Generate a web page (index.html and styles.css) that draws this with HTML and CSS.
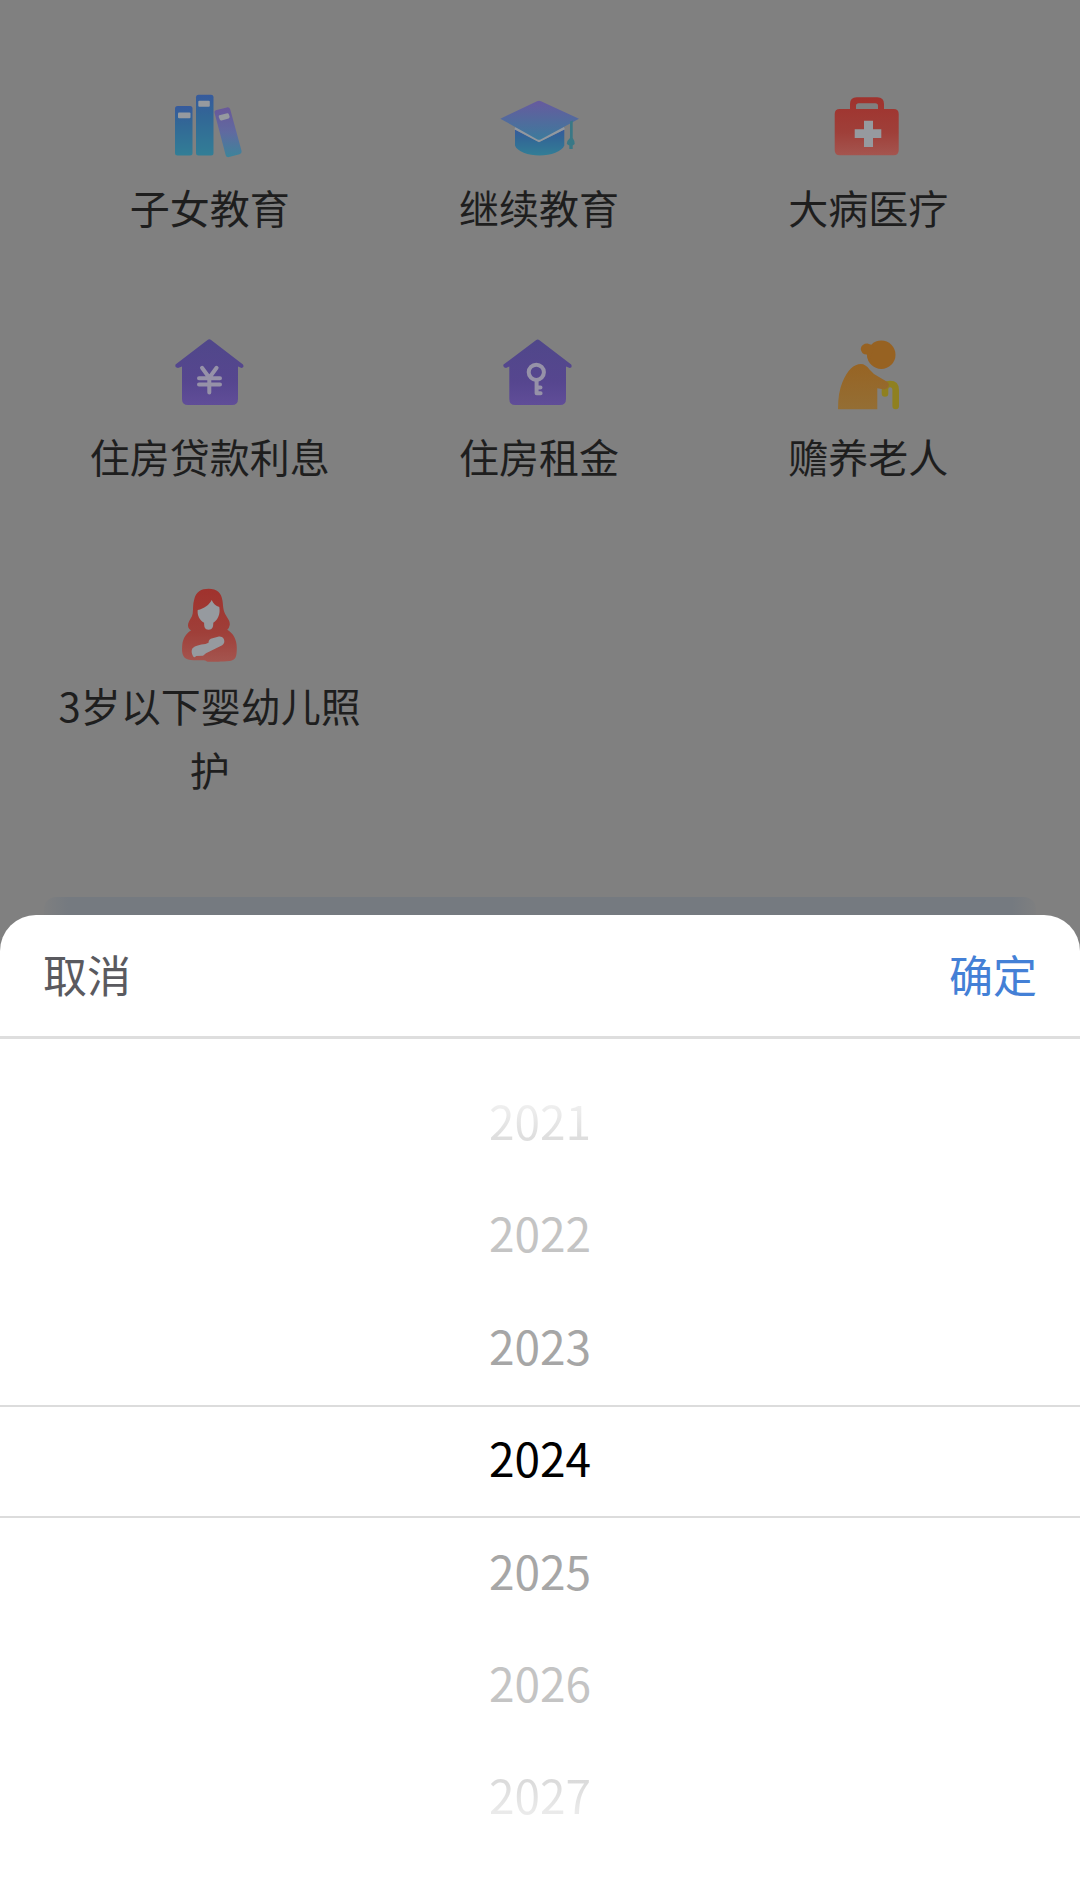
FILE: index.html
```
<!DOCTYPE html>
<html lang="zh-CN">
<head>
  <meta charset="UTF-8" />
  <title>专项附加扣除</title>
  <meta name="viewport" content="width=device-width,initial-scale=1" />
  <link rel="stylesheet" href="styles.css">
</head>
<body>
  <!-- shared gradients -->
  <svg class="defs" width="0" height="0">
    <defs>
      <linearGradient id="blue" x1="0" y1="0" x2="0" y2="1"><stop offset="0" stop-color="#365a9c"/><stop offset=".35" stop-color="#326796"/><stop offset="1" stop-color="#327e96"/></linearGradient>
      <linearGradient id="violet" x1="0" y1="0" x2="0" y2="1"><stop offset="0" stop-color="#69589a"/><stop offset=".5" stop-color="#606aa0"/><stop offset="1" stop-color="#3d849a"/></linearGradient>
      <linearGradient id="cap" x1="0" y1="0" x2="0" y2="1"><stop offset="0" stop-color="#675a9e"/><stop offset="1" stop-color="#3c7b9c"/></linearGradient>
      <linearGradient id="red" x1="0" y1="0" x2="0" y2="1"><stop offset="0" stop-color="#a0322d"/><stop offset=".6" stop-color="#9f3f39"/><stop offset="1" stop-color="#a4554f"/></linearGradient>
      <linearGradient id="house" x1="0" y1="0" x2="0" y2="1"><stop offset="0" stop-color="#50478a"/><stop offset=".65" stop-color="#56468f"/><stop offset="1" stop-color="#604d98"/></linearGradient>
      <linearGradient id="orange" x1="0" y1="0" x2="0" y2="1"><stop offset="0" stop-color="#976424"/><stop offset="1" stop-color="#946e34"/></linearGradient>
    </defs>
  </svg>

  <div class="grid">
    <div class="item">
      <svg class="icon" viewBox="0 0 80 90">
        <rect x="5" y="20" width="17.5" height="49.5" rx="2.5" fill="url(#blue)"/>
        <rect x="26" y="8.7" width="17.5" height="60.8" rx="2.5" fill="url(#blue)"/>
        <path d="M46.5 24L57 21.4Q59.4 21 60.2 23.3L71.6 65Q72 67.5 69.6 68.3L59 71.1Q56.4 71.6 55.7 69.2L44.6 27Q44 24.6 46.5 24Z" fill="url(#violet)"/>
        <rect class="light" x="8" y="26.5" width="12.5" height="5.7" rx="1"/>
        <rect class="light" x="28.3" y="14.7" width="11.5" height="6" rx="1"/>
        <path class="light" d="M49.4 29.3l7.8-2q1.2-.2 1.6 1l.8 2.3q.3 1.3-1 1.8l-7 2.1q-1.3.3-1.8-1l-1-2.6q-.3-1.2.6-1.6z"/>
      </svg>
      <p class="label">子女教育</p>
    </div>
    <div class="item">
      <svg class="icon" viewBox="0 0 80 90">
        <path d="M16 43.5L40 56l25.3-12.5v16C63 65.5 52 69.5 40.6 69.5S18 65.5 16 59.5z" fill="url(#blue)"/>
        <path class="edge" d="M16 42L40 54.5 65.3 42"/>
        <path d="M38 15.3q2-1 4 0L80 32.7 41.6 53.4q-1.6.8-3.2 0L1.3 32.7z" fill="url(#cap)"/>
        <path d="M71 35.5l2.7-1V52q2.5 3.500 2 6l-2 1.500v3.500h-3.400v-3.500l-2.500-1.500q0-3.500 3.200-6z" fill="#397886"/>
      </svg>
      <p class="label">继续教育</p>
    </div>
    <div class="item">
      <svg class="icon" viewBox="0 0 80 90">
        <path d="M22 23v-5q0-6.700 6.700-6.700h20.600Q56 11.300 56 18v5h9.700q5 0 5 5v36.300q0 5-5 5h-54q-5 0-5-5V28q0-5 5-5zM28 23h22v-3q0-2.700-2.700-2.700H30.700Q28 17.300 28 20z" fill="url(#red)" fill-rule="evenodd"/>
        <path class="light" d="M36 34.700h9v8.600h8.300V52H45v9h-9v-9h-9.300v-8.700H36z"/>
      </svg>
      <p class="label">大病医疗</p>
    </div>
    <div class="item">
      <svg class="icon" viewBox="0 0 80 90">
        <path d="M37.5 5q1.8-1.4 3.6 0L73 29.5q1.5 3-1.5 3.5L68 31.5V64q0 6-6 6H18q-6 0-6-6V31.5L8 33q-3.5-.5-2.5-3.5z" fill="url(#house)"/>
        <path class="line" d="M32 32.8l7.300 10 7.300-10M39.300 42.800v14.700M29 43.300h21M29 49.600h21"/>
      </svg>
      <p class="label">住房贷款利息</p>
    </div>
    <div class="item">
      <svg class="icon" viewBox="0 0 80 90">
        <path d="M36.900 5.200q1.800-1.400 3.600 0L72.200 29.500q1.500 3-1.500 3.500L67 31.500V64q0 6-6 6H16.300q-6 0-6-6V31.500L7 33q-3.500-.5-2.500-3.500z" fill="url(#house)"/>
        <circle class="line" cx="37.3" cy="37.3" r="7.6"/>
        <path class="line" d="M37.6 45v13.300h4M38 52.500h3.500"/>
      </svg>
      <p class="label">住房租金</p>
    </div>
    <div class="item">
      <svg class="icon" viewBox="0 0 80 90">
        <path class="cane" d="M57 58.5V54q0-5 5-5 5.700 0 5.700 6v16"/>
        <circle cx="53.3" cy="19.700" r="14.2" fill="#976222"/>
        <path d="M46 12q-2.500-3-6.500-3.500-6 0-6.800 5.500.8 5.500 6 5.500L41 27z" fill="#976222"/>
        <path d="M10 74.3Q10 57 14.5 47 22 29 33 29q4.500 0 8.500 5.500Q45 39 51 42l8.500 5q2.500 2.500.5 5.300-2 2.700-5 2l-5.700-1v21z" fill="url(#orange)"/>
      </svg>
      <p class="label">赡养老人</p>
    </div>
    <div class="item">
      <svg class="icon" viewBox="0 9.3 80 90">
        <path d="M38.7 14C47 14 51.5 18 52.5 26c.8 6 .5 9 2.800 13.500 2.500 4.500 4.700 6.500 4.500 10.500q-.5 3-2.500 5c6 3.500 9.500 10 9.500 18 0 9-1 12.500-7 13.200-9 .8-14 .8-22 .8-1.500 0-1.500-1.500-4-1.500-8 .2-14 .5-18-1.800-4-2.500-4-8-3.500-14 .6-6 4-11.500 8.700-14-2.600-2-3.500-4-2.800-7 1-3.700 4-6 4.500-10 .6-5 0-9 1.500-14C26 17 31 14 38.700 14z" fill="url(#red)"/>
        <path class="light" d="M27.700 35.3C34 34 39.5 30 41.700 25.300c1.600 3.500 4 6 7.600 7 1.200 7-1.200 12.500-6 15.700 0 4-.7 7-4.700 7s-4.500-3-4.500-7c-4.500-2.500-7-7-6.400-12.700z"/>
        <path class="light" d="M22.5 73.5q4-3.500 13-4.200l3-1.300q0-4 4-4.500l5.500-1.500c4-1.200 7 2 6.200 5.700-.6 2.300-3 3.300-5 4.300L36 78.500l-3 2.500-7 .2q-1.300 2.300-3 .3-2.500-5-.5-8z"/>
      </svg>
      <p class="label">3岁以下婴幼儿照护</p>
    </div>
  </div>
  <div class="panel"></div>

  <div class="sheet">
    <div class="sheet-header">
      <span class="cancel">取消</span>
      <span class="confirm">确定</span>
    </div>
    <div class="picker">
      <div class="year far">2021</div>
      <div class="year mid">2022</div>
      <div class="year near">2023</div>
      <div class="year selected">2024</div>
      <div class="year near">2025</div>
      <div class="year mid">2026</div>
      <div class="year far last">2027</div>
    </div>
  </div>
</body>
</html>
```
FILE: styles.css
```
* { box-sizing: border-box; }
body {
  margin: 0;
  height: 1879px;
  overflow: hidden;
  display: flex;
  flex-direction: column;
  background: #808080;
  color: #1e1e1e;
  font-family: "Noto Sans CJK SC", sans-serif;
}
.defs { position: absolute; }

/* deduction categories */
.grid {
  height: 897px;
  flex: none;
  padding: 86px 47px 0 45px;
  display: grid;
  grid-template-columns: repeat(3, 1fr);
  grid-template-rows: 249px 249px auto;
  align-content: start;
}
.item {
  display: flex;
  flex-direction: column;
  align-items: center;
}
.icon {
  width: 80px;
  height: 90px;
  flex: none;
}
.label {
  margin: -1.5px 0 0;
  padding: 0 8px;
  font-size: 40px;
  line-height: 64px;
  text-align: center;
}
.light { fill: #969a9f; }
.edge { fill: none; stroke: #9298a0; stroke-width: 3; }
.line {
  fill: none;
  stroke: #9692a8;
  stroke-width: 4;
  stroke-linecap: round;
  stroke-linejoin: round;
}
.cane {
  fill: none;
  stroke: #8f8020;
  stroke-width: 6.6;
  stroke-linecap: round;
}
.panel {
  flex: none;
  height: 18px;
  margin: 0 44px;
  border-radius: 12px 12px 0 0;
  background: linear-gradient(to right, #7e7f80, #757a80 24px, #757a80 calc(100% - 24px), #7e7f80);
}

/* bottom sheet, the corners show the page behind */
.sheet {
  flex: 1;
  background: #fff;
  border-radius: 36px 36px 0 0;
}
.sheet-header {
  height: 124px;
  padding: 0 43px;
  display: flex;
  justify-content: space-between;
  border-bottom: 3px solid #dedede;
  font-size: 44px;
  line-height: 118px;
}
.cancel { color: #5a5a5f; }
.confirm { color: #4480d6; }
.picker {
  padding-top: 29px;
  font-size: 46px;
  text-align: center;
}
.year {
  height: 112.4px;
  line-height: 105px;
}
.near { color: #a6a6a6; }
.mid { color: #c4c4c4; }
.far {
  color: transparent;
  background: linear-gradient(#efefef 33%, #dedede 62%);
  -webkit-background-clip: text;
  background-clip: text;
}
.last { background-image: linear-gradient(#dadada 33%, #eaeaea 62%); }
.selected {
  color: #000;
  border-top: 2px solid #dcdcdc;
  border-bottom: 2px solid #dcdcdc;
  line-height: 100px;
}
```
